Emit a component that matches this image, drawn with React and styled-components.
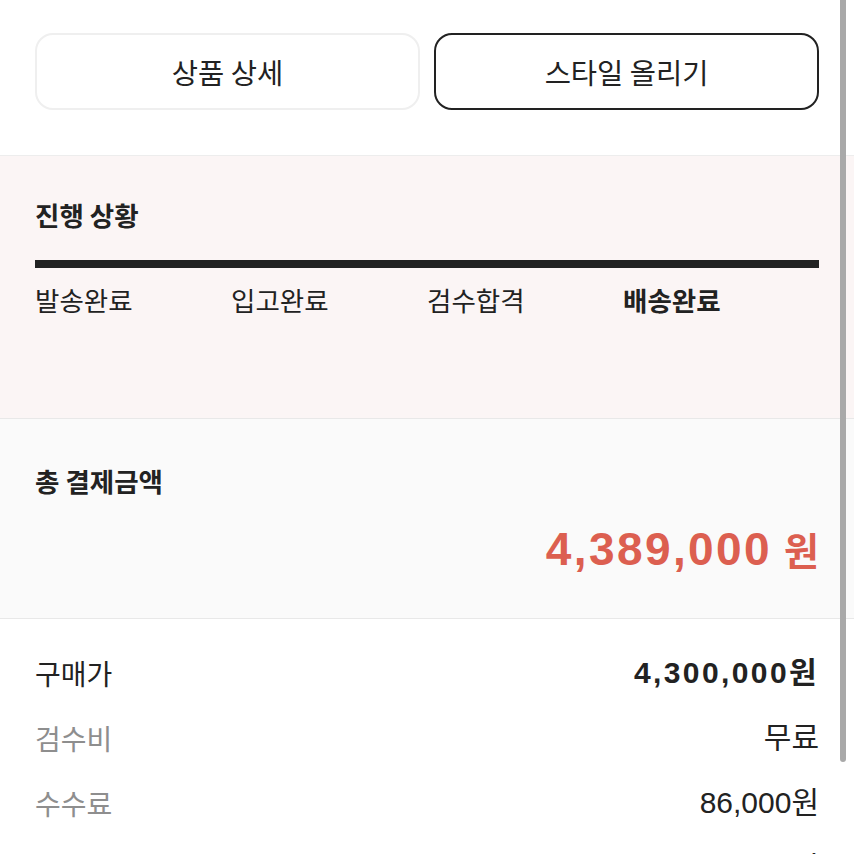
import React from "react";
import styled, { createGlobalStyle } from "styled-components";

const Global = createGlobalStyle`
  html, body { margin: 0; padding: 0; background: #ffffff; }
  body {
    font-family: "Liberation Sans", "Noto Sans CJK KR", sans-serif;
    color: #222222;
    overflow: hidden;
  }
  * { box-sizing: border-box; }
`;

const Page = styled.div`
  width: 854px;
  height: 854px;
  overflow: hidden;
  position: relative;
  display: flex;
  flex-direction: column;
`;

const ButtonBar = styled.div`
  display: grid;
  grid-template-columns: 1fr 1fr;
  gap: 14px;
  padding: 33px 35px 45px;
  border-bottom: 1px solid #ededed;
`;

const Button = styled.button`
  height: 77px;
  border-radius: 18px;
  background: #ffffff;
  border: ${(p) => (p.$dark ? "2px solid #222222" : "2px solid #efefef")};
  font-family: "Noto Sans CJK KR", sans-serif;
  font-size: 28.5px;
  color: #222222;
  cursor: pointer;
  padding: 0;
`;

const Section = styled.section`
  background: ${(p) => p.$bg};
  padding: ${(p) => p.$pad};
  border-bottom: 1px solid #e8e8e8;
  display: flex;
  flex-direction: column;
`;

const SectionTitle = styled.h2`
  margin: 0;
  font-family: "Noto Sans CJK KR", sans-serif;
  font-size: 26.5px;
  line-height: 32px;
  font-weight: 700;
  color: #222222;
`;

const ProgressBar = styled.div`
  margin-top: 29px;
  height: 8px;
  background: #222222;
`;

const Steps = styled.div`
  margin-top: 16px;
  display: grid;
  grid-template-columns: repeat(4, 1fr);
`;

const Step = styled.span`
  font-family: "Noto Sans CJK KR", sans-serif;
  font-size: 26.5px;
  line-height: 32px;
  font-weight: ${(p) => (p.$active ? 700 : 400)};
  color: #222222;
`;

const Amount = styled.div`
  margin-top: 26px;
  align-self: flex-end;
  font-size: 46px;
  line-height: 52px;
  font-weight: 700;
  color: #dc5f50;
  letter-spacing: 2.4px;
  display: flex;
  align-items: baseline;
  gap: 12px;
`;

const Won = styled.span`
  font-family: "Noto Sans CJK KR", sans-serif;
  font-size: 38px;
  letter-spacing: 0;
`;

const Rows = styled.div`
  padding: 38px 35px 0;
  display: flex;
  flex-direction: column;
  gap: 33px;
`;

const Row = styled.div`
  display: flex;
  justify-content: space-between;
  align-items: center;
  height: 32px;
`;

const Label = styled.span`
  font-family: "Noto Sans CJK KR", sans-serif;
  font-size: 28px;
  line-height: 32px;
  color: ${(p) => (p.$muted ? "#8e8e8e" : "#222222")};
`;

const Value = styled.span`
  font-family: "Liberation Sans", "Noto Sans CJK KR", sans-serif;
  font-size: 30px;
  line-height: 32px;
  font-weight: ${(p) => (p.$bold ? 700 : 400)};
  letter-spacing: ${(p) => (p.$bold ? "2.4px" : "0")};
  color: #222222;
`;

const Scrollbar = styled.div`
  position: absolute;
  top: 0;
  right: 8px;
  width: 6px;
  height: 762px;
  background: #a9a9a9;
  border-radius: 0 0 3px 3px;
`;

const steps = ["발송완료", "입고완료", "검수합격", "배송완료"];

const rows = [
  { label: "구매가", value: "4,300,000원", bold: true },
  { label: "검수비", value: "무료", muted: true },
  { label: "수수료", value: "86,000원", muted: true },
  { label: "배송비", value: "3,000원", muted: true },
];

export default function App() {
  return (
    <>
      <Global />
      <Page>
        <ButtonBar>
          <Button>상품 상세</Button>
          <Button $dark>스타일 올리기</Button>
        </ButtonBar>

        <Section $bg="#fbf5f5" $pad="43px 35px 102px">
          <SectionTitle>진행 상황</SectionTitle>
          <ProgressBar />
          <Steps>
            {steps.map((s, i) => (
              <Step key={s} $active={i === steps.length - 1}>
                {s}
              </Step>
            ))}
          </Steps>
        </Section>

        <Section $bg="#fafafa" $pad="46px 35px 43px">
          <SectionTitle>총 결제금액</SectionTitle>
          <Amount>
            4,389,000<Won>원</Won>
          </Amount>
        </Section>

        <Rows>
          {rows.map((r) => (
            <Row key={r.label}>
              <Label $muted={r.muted}>{r.label}</Label>
              <Value $bold={r.bold}>{r.value}</Value>
            </Row>
          ))}
        </Rows>

        <Scrollbar />
      </Page>
    </>
  );
}
